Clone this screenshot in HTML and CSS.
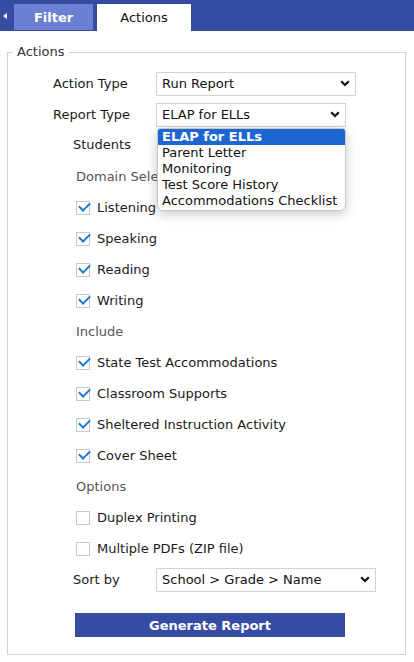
FILE: index.html
```html
<!DOCTYPE html>
<html>
<head>
<meta charset="utf-8">
<link rel="stylesheet" href="styles.css">
</head>
<body>
<div class="topbar">
  <div class="collapse"><span class="tri"></span></div>
  <div class="tab tab-filter">Filter</div>
  <div class="tab tab-actions">Actions</div>
</div>

<fieldset class="panel">
  <legend class="panel-legend">Actions</legend>

  <div class="row row-first">
    <div class="lbl lbl-wide">Action Type</div>
    <div class="select sel-200"><span>Run Report</span><svg class="chev" width="10" height="7" viewBox="0 0 10 7"><path d="M1.2 1.2 L5 5 L8.8 1.2" fill="none" stroke="#111" stroke-width="2.2"/></svg></div>
  </div>

  <div class="row">
    <div class="lbl lbl-wide">Report Type</div>
    <div class="select sel-190 has-pop"><span>ELAP for ELLs</span><svg class="chev" width="10" height="7" viewBox="0 0 10 7"><path d="M1.2 1.2 L5 5 L8.8 1.2" fill="none" stroke="#111" stroke-width="2.2"/></svg>
      <div class="popup">
        <div class="opt opt-sel">ELAP for ELLs</div>
        <div class="opt">Parent Letter</div>
        <div class="opt">Monitoring</div>
        <div class="opt">Test Score History</div>
        <div class="opt">Accommodations Checklist</div>
      </div>
    </div>
  </div>

  <div class="row row-students">
    <div class="lbl lbl-narrow">Students</div>
  </div>

  <div class="row section row-domain">Domain Selection</div>
  <div class="row check"><span class="cb on"></span>Listening</div>
  <div class="row check"><span class="cb on"></span>Speaking</div>
  <div class="row check"><span class="cb on"></span>Reading</div>
  <div class="row check"><span class="cb on"></span>Writing</div>

  <div class="row section">Include</div>
  <div class="row check"><span class="cb on"></span>State Test Accommodations</div>
  <div class="row check"><span class="cb on"></span>Classroom Supports</div>
  <div class="row check"><span class="cb on"></span>Sheltered Instruction Activity</div>
  <div class="row check"><span class="cb on"></span>Cover Sheet</div>

  <div class="row section">Options</div>
  <div class="row check"><span class="cb"></span>Duplex Printing</div>
  <div class="row check"><span class="cb"></span>Multiple PDFs (ZIP file)</div>

  <div class="row">
    <div class="lbl lbl-narrow">Sort by</div>
    <div class="select sel-220"><span>School &gt; Grade &gt; Name</span><svg class="chev" width="10" height="7" viewBox="0 0 10 7"><path d="M1.2 1.2 L5 5 L8.8 1.2" fill="none" stroke="#111" stroke-width="2.2"/></svg></div>
  </div>

  <div class="btn-row">
    <button class="btn">Generate Report</button>
  </div>
</fieldset>
</body>
</html>
```
FILE: styles.css
```css
* { box-sizing: border-box; }
body {
  margin: 0;
  font-family: "DejaVu Sans", sans-serif;
  font-size: 13px;
  color: #1a1a1a;
  background: #fff;
}
.topbar {
  height: 31px;
  background: #364ca2;
  display: flex;
  align-items: flex-end;
}
.collapse {
  width: 14px;
  height: 31px;
  display: flex;
  align-items: center;
  justify-content: center;
}
.tri {
  width: 0;
  height: 0;
  border-top: 3.5px solid transparent;
  border-bottom: 3.5px solid transparent;
  border-right: 4px solid #fff;
  margin-right: 4px;
}
.tab {
  height: 27px;
  display: flex;
  align-items: center;
  justify-content: center;
}
.tab-filter {
  width: 79px;
  background: #6b80d2;
  color: #fff;
  font-weight: bold;
  margin-bottom: 1px;
  height: 26px;
}
.tab-actions {
  width: 94px;
  margin-left: 4px;
  background: #fff;
  color: #111;
}
.panel {
  margin: 13px 8px 0 7px;
  border: 1px solid #d3d3d3;
  padding: 0 0 17px 0;
  min-width: 0;
}
.panel-legend {
  margin-left: 5px;
  padding: 0 4px;
  line-height: 16px;
  color: #333;
}
.row {
  display: flex;
  align-items: center;
  height: 31px;
}
.row-first { margin-top: 8px; }
.lbl-wide { padding-left: 45px; width: 148px; }
.lbl-narrow { padding-left: 65px; width: 148px; }
.select {
  position: relative;
  height: 24px;
  border: 1px solid #d3d3d3;
  display: flex;
  align-items: center;
  justify-content: space-between;
  padding: 0 5px;
  background: #fff;
  color: #111;
}
.sel-200 { width: 200px; }
.sel-190 { width: 190px; }
.sel-220 { width: 220px; }
.chev { flex: none; }
.popup {
  position: absolute;
  top: 24px;
  left: 0;
  width: 189px;
  background: #fff;
  border: 1px solid #c8c8c8;
  border-radius: 3px 3px 6px 6px;
  box-shadow: 0 3px 12px rgba(0,0,0,0.22);
  overflow: hidden;
  z-index: 5;
  padding-bottom: 1px;
}
.opt {
  height: 16px;
  line-height: 16px;
  padding-left: 4px;
  color: #111;
  white-space: nowrap;
}
.opt-sel {
  background: #1d66d1;
  color: #fff;
  font-weight: bold;
}
.row-students { height: 29px; }
.section {
  padding-left: 68px;
  color: #555;
}
.row-domain { height: 33px; padding-top: 2px; }
.check { padding-left: 68px; }
.cb {
  width: 14px;
  height: 14px;
  border: 1px solid #c8c8c8;
  margin-right: 7px;
  flex: none;
  position: relative;
}
.cb.on::after {
  content: "";
  position: absolute;
  left: 2px;
  top: 0px;
  width: 9px;
  height: 5px;
  border-left: 2.5px solid #1b78cc;
  border-bottom: 2.5px solid #1b78cc;
  transform: rotate(-45deg);
}
.btn-row {
  padding-left: 67px;
  padding-top: 18px;
}
.btn {
  width: 270px;
  height: 24px;
  border: none;
  background: #364ca2;
  color: #fff;
  font-family: "DejaVu Sans", sans-serif;
  font-weight: bold;
  font-size: 13px;
  padding: 0;
  display: block;
}
```
